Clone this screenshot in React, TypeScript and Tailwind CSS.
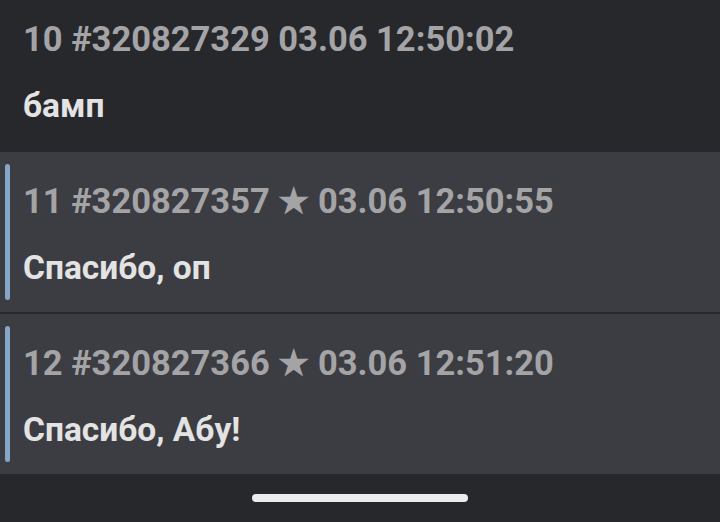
const posts = [
  { n: 11, id: '320827357', date: '03.06 12:50:55', text: 'Спасибо, оп' },
  { n: 12, id: '320827366', date: '03.06 12:51:20', text: 'Спасибо, Абу!' },
];

function Reply({ n, id, date, text }: { n: number; id: string; date: string; text: string }) {
  return (
    <div className="flex bg-[#3c3d42] pl-[5px] py-[12px]">
      <div className="w-[5px] shrink-0 rounded-full bg-[#85a6c7]" />
      <div className="pl-[13px] pt-[17px] pb-[12px]">
        <div className="text-[34.5px] leading-[40px] font-bold text-[#a4a4a7]">
          {n} #{id} ★ {date}
        </div>
        <div className="mt-[27px] text-[33.5px] leading-[40px] font-bold text-[#e3e3e3]">{text}</div>
      </div>
    </div>
  );
}

export default function App() {
  return (
    <div className="w-[720px] h-[522px] overflow-hidden bg-[#27282c] font-['Roboto','Noto_Sans',sans-serif] flex flex-col">
      {/* OP post (scrolled) */}
      <div className="pl-[23px] pt-[19px] pb-[26px] h-[152px]">
        <div className="text-[34.5px] leading-[40px] font-bold text-[#a4a4a7]">10 #320827329 03.06 12:50:02</div>
        <div className="mt-[27px] text-[33.5px] leading-[40px] font-bold text-[#e3e3e3]">бамп</div>
      </div>

      <div className="flex flex-col gap-[2px]">
        {posts.map((p) => (
          <Reply key={p.n} {...p} />
        ))}
      </div>

      {/* home indicator */}
      <div className="flex-1 flex items-center justify-center">
        <div className="w-[216px] h-[8px] rounded-full bg-[#ececec]" />
      </div>
    </div>
  );
}
